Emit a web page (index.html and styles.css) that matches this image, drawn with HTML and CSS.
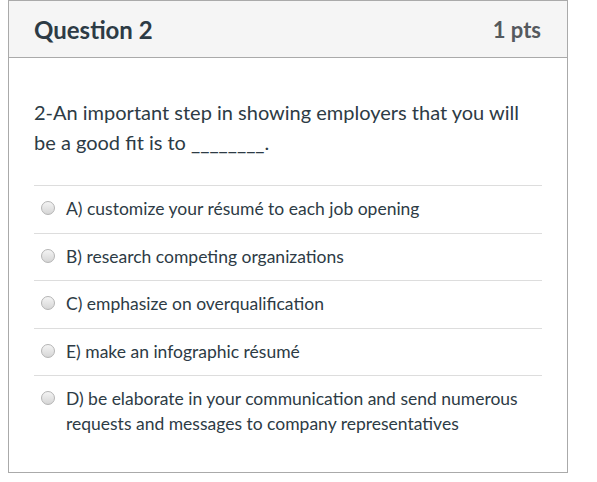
FILE: index.html
```html
<!DOCTYPE html>
<html>
<head>
<meta charset="utf-8">
<link rel="stylesheet" href="styles.css">
</head>
<body>
<div class="question">
  <div class="header">
    <h2 class="title">Question 2</h2>
    <span class="pts">1 pts</span>
  </div>
  <div class="body">
    <p class="text">2-An important step in showing employers that you will be a good fit is to ________.</p>
    <div class="answers">
      <label class="answer"><span class="radio"></span><span class="label">A) customize your résumé to each job opening</span></label>
      <label class="answer"><span class="radio"></span><span class="label">B) research competing organizations</span></label>
      <label class="answer"><span class="radio"></span><span class="label">C) emphasize on overqualification</span></label>
      <label class="answer"><span class="radio"></span><span class="label">E) make an infographic résumé</span></label>
      <label class="answer"><span class="radio"></span><span class="label">D) be elaborate in your communication and send numerous requests and messages to company representatives</span></label>
    </div>
  </div>
</div>
</body>
</html>
```
FILE: styles.css
```css
html, body {
  margin: 0;
  padding: 0;
  background: #fff;
}
body {
  font-family: Lato, "Open Sans", sans-serif;
  color: #2d3b45;
  padding-left: 8px;
}
.question {
  width: 558px;
  height: 471px;
  border: 1px solid #aaa;
  box-sizing: content-box;
}
.header {
  height: 56px;
  background: #f5f5f5;
  border-bottom: 1px solid #aaa;
  display: flex;
  align-items: center;
  justify-content: space-between;
  padding: 0 26px 0 25px;
}
.title {
  margin: 0;
  font-size: 24px;
  font-weight: 700;
  color: #2d3b45;
}
.pts {
  font-size: 22px;
  font-weight: 700;
  color: #555a5e;
}
.body {
  padding: 0 25px;
}
.text {
  margin: 39px 0 28px;
  font-size: 20px;
  line-height: 30px;
}
.answers {
  display: flex;
  flex-direction: column;
}
.answer {
  display: flex;
  align-items: flex-start;
  border-top: 1px solid #ddd;
  padding: 11px 0 11px 7px;
  font-size: 17.5px;
  line-height: 24.5px;
}
.radio {
  flex: none;
  width: 12px;
  height: 12px;
  margin: 4px 11px 0 0;
  border: 1px solid #b4b4b4;
  border-radius: 50%;
  background: linear-gradient(#f4f4f4, #d6d6d6);
}
.label {
  flex: 1;
}
```
